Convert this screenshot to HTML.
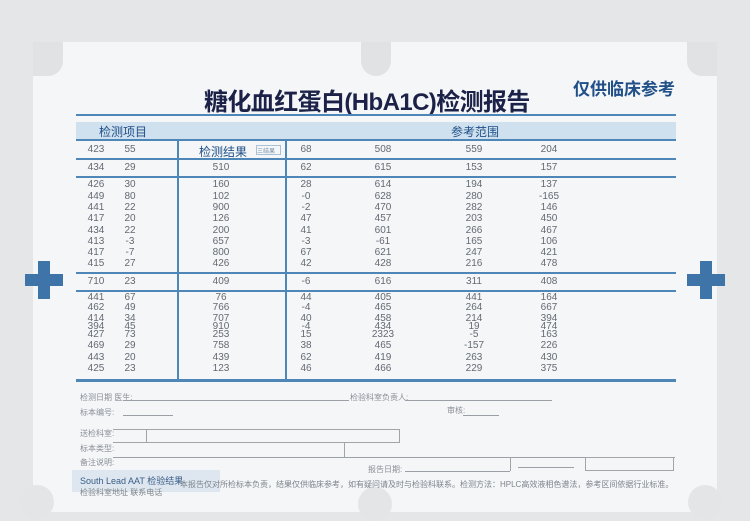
<!DOCTYPE html>
<html><head><meta charset="utf-8"><style>
*{margin:0;padding:0;box-sizing:border-box}
body{width:750px;height:500px;background:#e5e6e8;position:relative;overflow:hidden;font-family:"Liberation Sans","Noto Sans CJK SC",sans-serif}
.paper{position:absolute;left:33px;top:42px;width:684px;height:470px;background:#f4f6f8;border-radius:4px}
.notch{position:absolute;width:30px;height:34px;background:#e1e2e4;border-radius:0 0 15px 15px}
.bn{position:absolute;width:34px;height:34px;background:#e4e5e7;border-radius:50%}
.a{position:absolute;white-space:nowrap}
.hl{position:absolute;left:76px;width:600px;height:2px;background:#4f86b8}
.vl{position:absolute;width:2px;background:#4f86b8;top:140px;height:241px}
.n{position:absolute;font-size:10px;color:#646a72;transform:translateX(-50%);font-family:"Liberation Sans Narrow","Liberation Sans",sans-serif}
.lbl{position:absolute;font-size:8px;color:#8a8f96}
.ln{position:absolute;height:1px;background:#9aa0a6}
.cross{position:absolute;width:38px;height:38px}
.cross:before{content:"";position:absolute;left:13px;top:0;width:12px;height:38px;background:#3f74a8}
.cross:after{content:"";position:absolute;left:0;top:13px;width:38px;height:12px;background:#3f74a8}
</style></head><body>
<div class="paper"></div>
<div class="notch" style="left:33px;top:42px;border-radius:0 0 15px 0;"></div>
<div class="notch" style="left:361px;top:42px;"></div>
<div class="notch" style="left:687px;top:42px;border-radius:0 0 0 15px;"></div>
<div class="bn" style="left:20px;top:485px"></div>
<div class="bn" style="left:358px;top:487px"></div>
<div class="bn" style="left:688px;top:485px"></div>
<div class="cross" style="left:25px;top:261px"></div>
<div class="cross" style="left:687px;top:261px"></div>

<div class="a" style="left:204px;top:82px;font-size:24px;font-weight:bold;color:#1b2147;letter-spacing:-0.6px">糖化血红蛋白(HbA1C)检测报告</div>
<div class="a" style="left:573px;top:75px;font-size:17px;font-weight:bold;color:#215088">仅供临床参考</div>

<div class="hl" style="top:114px;height:2px"></div>
<div class="a" style="left:76px;top:122px;width:600px;height:18px;background:#cfe1ef"></div>
<div class="a" style="left:99px;top:123px;font-size:12px;color:#1f4f87">检测项目</div>
<div class="a" style="left:451px;top:123px;font-size:12px;color:#1f4f87">参考范围</div>
<div class="hl" style="top:139px"></div>
<div class="hl" style="top:158px"></div>
<div class="hl" style="top:176px"></div>
<div class="hl" style="top:272px"></div>
<div class="hl" style="top:290px"></div>
<div class="hl" style="top:379px;height:3px"></div>
<div class="vl" style="left:177px"></div>
<div class="vl" style="left:285px"></div>
<div class="a" style="left:199px;top:143px;font-size:12px;color:#1f4f87">检测结果</div>
<div class="a" style="left:256px;top:145px;width:25px;height:10px;border:1px solid #a9c0d6;font-size:6px;color:#7d93a8">三结果</div>

<div id="nums"></div>
<script>
var rows=[[150,"423","55","","68","508","559","204"],[168,"434","29","510","62","615","153","157"],
[185,"426","30","160","28","614","194","137"],[197,"449","80","102","-0","628","280","-165"],[208,"441","22","900","-2","470","282","146"],[219,"417","20","126","47","457","203","450"],[231,"434","22","200","41","601","266","467"],[242,"413","-3","657","-3","-61","165","106"],[253,"417","-7","800","67","621","247","421"],[264,"415","27","426","42","428","216","478"],
[282,"710","23","409","-6","616","311","408"],
[298,"441","67","76","44","405","441","164"],[308,"462","49","766","-4","465","264","667"],[319,"414","34","707","40","458","214","394"],[327,"394","45","910","-4","434","19","474"],[335,"427","73","253","15","2323","-5","163"],[346,"469","29","758","38","465","-157","226"],[358,"443","20","439","62","419","263","430"],[369,"425","23","123","46","466","229","375"]];
var xs=[96,130,221,306,383,474,549],h="";
rows.forEach(function(r){for(var i=1;i<8;i++){if(r[i])h+='<div class="n" style="left:'+xs[i-1]+'px;top:'+(r[0]-6)+'px">'+r[i]+'</div>';}});
document.getElementById("nums").innerHTML=h;
</script>

<div class="lbl" style="left:80px;top:392px">检测日期 医生:</div>
<div class="ln" style="left:123px;top:400px;width:226px"></div>
<div class="lbl" style="left:350px;top:392px">检验科室负责人:</div>
<div class="ln" style="left:405px;top:400px;width:147px"></div>
<div class="lbl" style="left:80px;top:407px">标本编号:</div>
<div class="ln" style="left:123px;top:415px;width:50px"></div>
<div class="lbl" style="left:447px;top:405px">审核:</div>
<div class="ln" style="left:463px;top:415px;width:36px"></div>
<div class="lbl" style="left:80px;top:428px">送检科室:</div>
<div class="a" style="left:113px;top:429px;width:287px;height:14px;border:1px solid #a0a5aa;border-left:none"></div>
<div class="a" style="left:146px;top:429px;width:1px;height:14px;background:#a0a5aa"></div>
<div class="lbl" style="left:80px;top:443px">标本类型:</div>
<div class="ln" style="left:113px;top:457px;width:562px"></div>
<div class="a" style="left:344px;top:443px;width:1px;height:14px;background:#a0a5aa"></div>
<div class="lbl" style="left:80px;top:457px">备注说明:</div>
<div class="a" style="left:510px;top:457px;width:1px;height:14px;background:#a0a5aa"></div>
<div class="lbl" style="left:368px;top:464px">报告日期:</div>
<div class="ln" style="left:405px;top:471px;width:105px"></div>
<div class="ln" style="left:518px;top:467px;width:56px"></div>
<div class="a" style="left:585px;top:457px;width:89px;height:14px;border:1px solid #a0a5aa"></div>
<div class="a" style="left:72px;top:470px;width:148px;height:22px;background:#d8e4ee;opacity:.8"></div>
<div class="a" style="left:80px;top:474px;font-size:9px;color:#3a5d86">South Lead AAT 检验结果</div>
<div class="a" style="left:180px;top:479px;font-size:8px;color:#7e848b">本报告仅对所检标本负责，结果仅供临床参考，如有疑问请及时与检验科联系。检测方法：HPLC高效液相色谱法，参考区间依据行业标准。</div>
<div class="a" style="left:80px;top:487px;font-size:8px;color:#7e848b">检验科室地址 联系电话</div>
</body></html>
